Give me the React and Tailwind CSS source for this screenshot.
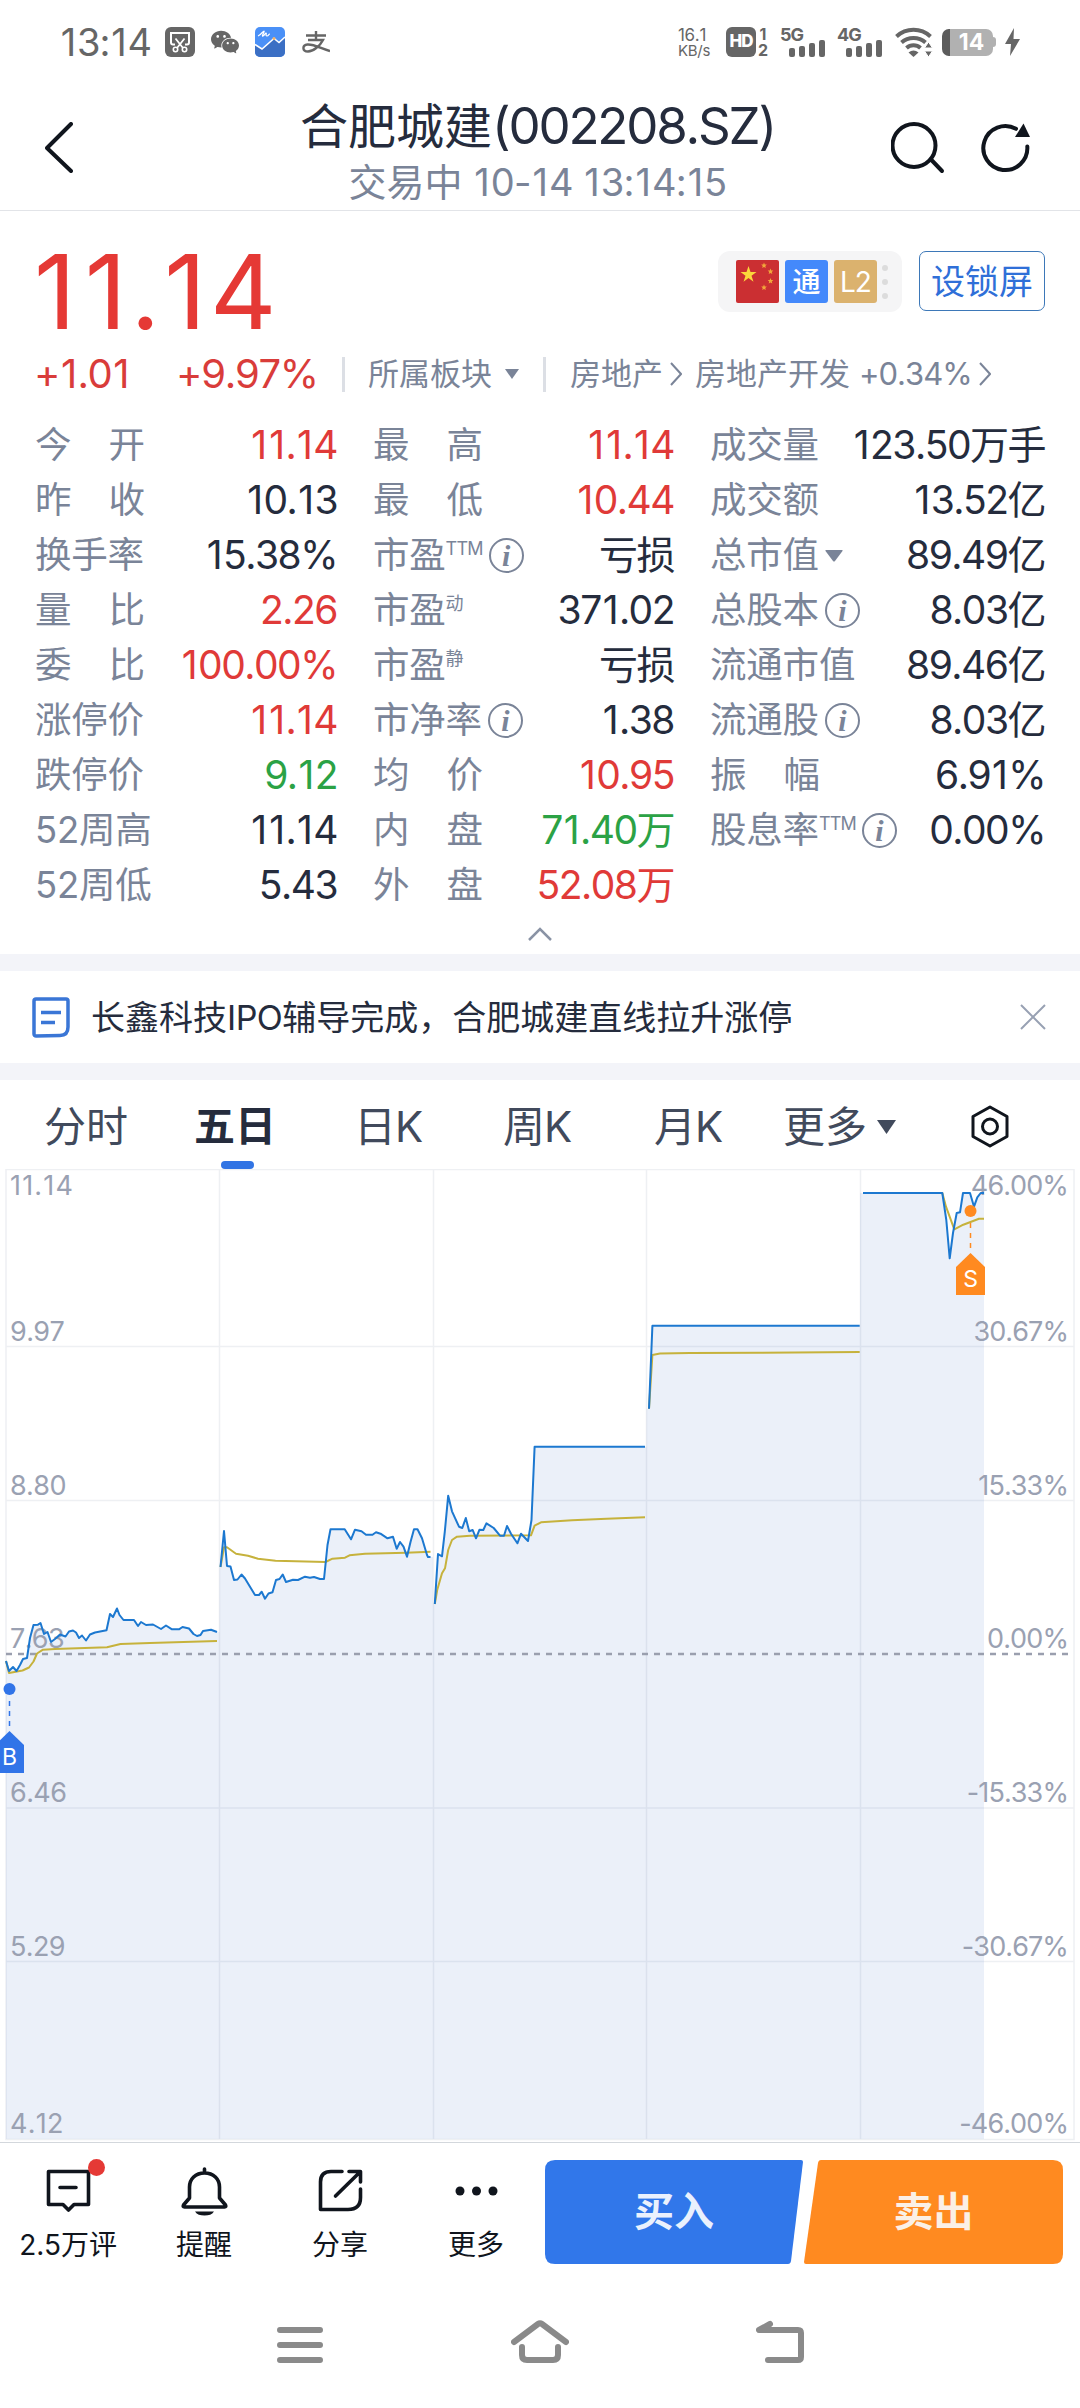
import React from 'react';
import { AiFillWechat } from 'react-icons/ai';

const RED = 'text-[#e03a38]';
const GREEN = 'text-[#2ba245]';
const DARK = 'text-[#252c3d]';

const columns = [
  [
    { label: '今开', value: '11.14', color: RED },
    { label: '昨收', value: '10.13' },
    { label: '换手率', value: '15.38%' },
    { label: '量比', value: '2.26', color: RED },
    { label: '委比', value: '100.00%', color: RED },
    { label: '涨停价', value: '11.14', color: RED },
    { label: '跌停价', value: '9.12', color: GREEN },
    { label: '52周高', value: '11.14' },
    { label: '52周低', value: '5.43' },
  ],
  [
    { label: '最高', value: '11.14', color: RED },
    { label: '最低', value: '10.44', color: RED },
    { label: '市盈', sup: 'TTM', info: true, value: '亏损' },
    { label: '市盈', sup: '动', value: '371.02' },
    { label: '市盈', sup: '静', value: '亏损' },
    { label: '市净率', info: true, value: '1.38' },
    { label: '均价', value: '10.95', color: RED },
    { label: '内盘', value: '71.40万', color: GREEN },
    { label: '外盘', value: '52.08万', color: RED },
  ],
  [
    { label: '成交量', value: '123.50万手' },
    { label: '成交额', value: '13.52亿' },
    { label: '总市值', caret: true, value: '89.49亿' },
    { label: '总股本', info: true, value: '8.03亿' },
    { label: '流通市值', value: '89.46亿' },
    { label: '流通股', info: true, value: '8.03亿' },
    { label: '振幅', value: '6.91%' },
    { label: '股息率', sup: 'TTM', info: true, value: '0.00%' },
  ],
];

const days = [
  {
    start: 6,
    end: 219.5,
    price:
      '6,1661 9,1671 13,1667 16.5,1671 20,1665 23,1659 27,1658 30,1638 33.5,1625 38,1624.7 40.5,1623 44,1634 47.5,1632 51,1642 55,1639 60,1634.5 65.5,1636.5 69,1631.5 73,1630.5 76,1632.5 79,1638 82,1635.5 86,1640.5 90,1634.5 95,1632.5 106.5,1630.3 110,1614 113,1617 117,1608.5 119.5,1615 123.5,1620 134,1620 138,1626 141,1622 146,1625 153,1624.5 161,1629 166,1625.5 172,1629.3 179,1629.3 182.5,1627 189,1628.5 193.5,1634 197,1636 200.5,1635 203,1631 211,1629.7 217,1632',
    average:
      '6,1661 9,1673 22.5,1670.5 29,1667.5 33.5,1661.5 37,1653.5 43,1649.7 55,1649 107,1647.3 120.5,1644 150,1643 217,1641',
  },
  {
    start: 219.5,
    end: 433,
    price:
      '220.5,1567 224,1531 227,1566 230.5,1566.5 234,1580 237.5,1579.5 241.5,1574.5 245,1578.5 255,1595 259,1595 261.7,1591.7 265,1598.7 268.5,1593.5 272.5,1592.3 276,1580 279.5,1579 282.7,1574.5 286,1582 293,1579.7 298,1580 305,1576.7 310,1577.7 314,1577 320,1579 324,1579 327.5,1545 330.5,1529.3 344.7,1529.3 351,1539.3 355,1529.7 361.5,1531.3 366,1534.7 372.5,1534.7 376,1532.3 380.5,1533.7 387.5,1538.3 393,1536.7 396.7,1548.7 400,1542 403.5,1546.7 407,1556.7 410.5,1542 414,1529.3 417.5,1529.3 422,1538.3 427,1555 428,1557 430.5,1557',
    average:
      '220.5,1567 224,1547.3 227,1547.3 236,1553.7 248,1555.7 258,1558.7 275.5,1560.7 325.5,1562 332.5,1558.7 345,1557.7 349.5,1555.3 365,1553.7 406,1552.7 430.5,1551.7',
  },
  {
    start: 433,
    end: 646.5,
    price:
      '434.8,1604 438,1554 442,1556.3 444.8,1531.7 448.2,1495.7 452,1511.3 459,1526.7 462.3,1528 465.8,1518 469.2,1531.3 472.7,1530 476,1538.3 479.5,1529.7 483.3,1530 486.4,1523.3 493.7,1528 500,1535.7 504,1535.7 507,1526 511,1533.7 517.4,1543.3 521,1533.7 528,1541 531.5,1520 534.6,1446.7 645,1446.7',
    average:
      '434.8,1604 437.2,1590 442,1573.3 445,1568.3 448.2,1550 452,1540 457,1536.7 470,1535.7 531,1535.3 534.6,1525.7 541,1522.3 572,1520.3 606.6,1518.7 645,1517.3',
  },
  {
    start: 646.5,
    end: 860,
    price: '649,1408.7 652.4,1325.7 859.7,1325.7',
    average: '649,1408.7 652.4,1355 660,1353.5 690,1353 760,1352.7 859.7,1352',
  },
  {
    start: 860,
    end: 984,
    price:
      '863,1193 942.3,1193 946.3,1220 949.7,1258.3 953,1233 956.7,1213 960,1212.3 963,1193 970,1193 974,1206.7 977.3,1197.3 980.7,1193 984,1193',
    average: '863,1193 942.3,1193 946,1206.7 954.3,1229.3 963.3,1224.7 979,1218.7 984,1218.7',
  },
];

const axisLabels = [
  { y: 1195, price: '11.14', percent: '46.00%' },
  { y: 1341, price: '9.97', percent: '30.67%' },
  { y: 1494.5, price: '8.80', percent: '15.33%' },
  { y: 1648, price: '7.63', percent: '0.00%' },
  { y: 1802, price: '6.46', percent: '-15.33%' },
  { y: 1955.5, price: '5.29', percent: '-30.67%' },
  { y: 2133, price: '4.12', percent: '-46.00%' },
];

// Inter's "1" is narrow, so it gets a little room on both sides
const Num = ({ children }) =>
  children.split(/(1)/).map((part, index) =>
    part === '1' ? (
      <span key={index} className="px-[0.048em]">
        1
      </span>
    ) : (
      part
    )
  );

const SignalBars = ({ label }) => (
  <div className="relative h-[30px] w-[45px]">
    <span className="absolute left-0 top-0 text-[18px] font-bold leading-[15px] tracking-[-1px]">{label}</span>
    <div className="absolute bottom-0 right-0 flex items-end gap-[4px]">
      <span className="h-[9px] w-[6px] rounded-[2px] bg-[#666]" />
      <span className="h-[11px] w-[6px] rounded-[2px] bg-[#666]" />
      <span className="h-[14px] w-[6px] rounded-[2px] bg-[#666]" />
      <span className="h-[17px] w-[6px] rounded-[2px] bg-[#666]" />
    </div>
  </div>
);

const StatusBar = () => (
  <div className="flex h-[84px] items-center justify-between pl-[60px] pr-[60px] text-[#666]">
    <div className="flex items-center">
      <span className="-ml-[1px] w-[106px] text-[38px] leading-none tracking-[-1px]">
        <Num>13:14</Num>
      </span>
      <svg width="30" height="30" viewBox="0 0 30 30" fill="none">
        <rect width="30" height="30" rx="6" fill="#666" />
        <path d="M10 17.500H8a2 2 0 0 1-2-2V6h18v9.500a2 2 0 0 1-2 2h-2" stroke="#fff" strokeWidth="2" />
        <path d="M10.500 11.500 18 21M19.500 11.500 12 21" stroke="#fff" strokeWidth="1.800" />
        <circle cx="10.500" cy="22.500" r="2.200" stroke="#fff" strokeWidth="1.600" />
        <circle cx="19.500" cy="22.500" r="2.200" stroke="#fff" strokeWidth="1.600" />
      </svg>
      <AiFillWechat size={32} className="ml-[14px]" />
      <svg className="ml-[14px]" width="30" height="30" viewBox="0 0 30 30" fill="none">
        <rect width="30" height="30" rx="5" fill="#4a90f7" />
        <path d="M0 17.500 7 22 19 11.500 24 15.500 30 10V25a5 5 0 0 1-5 5H5a5 5 0 0 1-5-5Z" fill="#3b6fc4" />
        <path d="M0 17.500 7 22 19 11.500 24 15.500 30 10" stroke="#fff" strokeWidth="1.500" />
        <circle cx="19" cy="11.500" r="1.500" fill="#f3b46b" />
        <path d="M3 9c3-1 5-5 6-5s-3 6-1 5 2-3 3-3-1 3 1 3 1-2 3-2" stroke="#fff" strokeWidth="1.200" />
      </svg>
      <svg className="ml-[17px]" width="28" height="22" viewBox="0 0 28 22" fill="none" stroke="#666" strokeWidth="2.400">
        <path d="M4 4.500H24M14 0V9M6 9H21C18 15 11 20.500 6 20.500c-6 0-6-6.500-.5-7C12 13 20 18 28 20" />
      </svg>
    </div>

    <div className="flex items-center">
      <div className="mr-[13px] w-[35px] whitespace-nowrap text-[17px] leading-[17px] tracking-[-0.300px]">
        <div>16.1</div>
        <div className="text-[15px] leading-[14px]">KB/s</div>
      </div>
      <span className="flex h-[30px] w-[30px] items-center justify-center rounded-[6px] bg-[#666] text-[17px] font-extrabold tracking-[-1px] text-white">
        HD
      </span>
      <div className="ml-[2px] mr-[12px] w-[10px] text-center text-[16px] font-bold leading-[16px]">
        <div>1</div>
        <div>2</div>
      </div>
      <SignalBars label="5G" />
      <div className="w-[12px]" />
      <SignalBars label="4G" />
      <svg className="ml-[13px]" width="38" height="30" viewBox="0 0 38 30" fill="none" stroke="#666" strokeWidth="4">
        <path d="M1.500 9.500a25 25 0 0 1 34 0" />
        <path d="M6.500 15.500a18 18 0 0 1 24 0" />
        <path d="M11.500 21a10.500 10.500 0 0 1 14 0" />
        <path d="m13.500 25.500 5 4.500 5-4.500a8 8 0 0 0-10 0Z" fill="#666" stroke="none" />
        <path d="m33.500 15 4 6h-8Zm0 15 4-6h-8Z" fill="#666" stroke="#fff" strokeWidth="1" />
      </svg>
      <div className="ml-[9px] flex items-center">
        <div className="flex h-[27px] w-[51px] items-center justify-center overflow-hidden rounded-[7px] border-l-[8px] border-[#5c5c5c] bg-[#b1b1b1] text-[23px] font-bold text-white">
          14
        </div>
        <span className="h-[10px] w-[3px] rounded-r bg-[#b1b1b1]" />
      </div>
      <svg className="ml-[9px]" width="15" height="28" viewBox="0 0 15 28" fill="#666">
        <path d="M9 0 0 16h6L5 28 15 11H8.500Z" />
      </svg>
    </div>
  </div>
);

const Header = () => (
  <header className="flex h-[127px] items-start justify-between border-b border-[#e2e4e8] pl-[45px] pr-[50px]">
    <div className="w-[139px] pt-[38px]">
      <svg width="28" height="51" viewBox="0 0 28 51" fill="none" stroke="#10151d" strokeWidth="4" strokeLinecap="round" strokeLinejoin="round">
        <path d="M26 2 2 26 26 49" />
      </svg>
    </div>
    <div className="flex flex-col items-center pt-[12px]">
      <h1 className="whitespace-nowrap text-[51px] leading-[60px] tracking-[-2.200px] text-[#252c3d]">
        <span className="text-[48px] tracking-normal">合肥城建</span>(002208.SZ)
      </h1>
      <p className="whitespace-nowrap text-[38px] leading-[50px] tracking-[-0.800px] text-[#7a8498]">
        <span className="tracking-normal">交易中</span> <Num>10-14 13:14:15</Num>
      </p>
    </div>
    <div className="flex w-[139px] gap-[36px] pt-[38px]">
      <svg width="54" height="52" viewBox="0 0 54 52" fill="none" stroke="#10151d" strokeWidth="4" strokeLinecap="round">
        <circle cx="23" cy="23.500" r="21.500" />
        <path d="M40 37.500 51 49" />
      </svg>
      <svg width="49" height="52" viewBox="0 0 49 52" fill="none" stroke="#10151d" strokeWidth="4" strokeLinecap="round">
        <path d="M46.300 24.500A22 22 0 1 1 35 6.800" />
        <path d="M42.500 1.500 34 15H49Z" fill="#10151d" stroke="none" />
      </svg>
    </div>
  </header>
);

const ChevronThin = () => (
  <svg width="12" height="24" viewBox="0 0 12 24" fill="none" stroke="#7a8498" strokeWidth="2">
    <path d="m1 1 10 11L1 23" />
  </svg>
);

const PriceSummary = () => (
  <section className="pl-[35px] pr-[35px]">
    <div className="flex h-[133px] items-start justify-between pt-[40px]">
      <div className="-ml-[6px] pt-[3px] text-[103px] leading-[75px] tracking-[-1px] text-[#e53935]">
        <Num>11.14</Num>
      </div>
      <div className="flex items-start gap-[17px]">
        <div className="flex h-[61px] w-[184px] items-center gap-[6px] rounded-[12px] bg-[#f5f5f6] pl-[18px]">
          <svg width="43" height="43" viewBox="0 0 43 43">
            <rect width="43" height="43" rx="2" fill="#cb2f32" />
            <path d="m12.500 6 2 6h6l-5 3.700 2 6.100-5-3.800-5 3.800 2-6.100-5-3.700h6Z" fill="#fbd73b" />
            <g fill="#f2a73b">
              <path id="star" d="m28 2.500.8 1.900 2 .2-1.500 1.300.5 2L28 6.900l-1.800 1 .5-2-1.500-1.300 2-.2Z" />
              <use href="#star" x="6.500" y="6" />
              <use href="#star" x="6.500" y="15.500" />
              <use href="#star" y="22" />
            </g>
          </svg>
          <span className="flex h-[43px] w-[43px] items-center justify-center rounded-[3px] bg-[#4489fb] text-[28px] font-medium text-white">通</span>
          <span className="flex h-[43px] w-[43px] items-center justify-center rounded-[3px] bg-[#dbb26e] text-[28px] tracking-[-1px] text-white">L2</span>
          <div className="-ml-[1px] flex flex-col gap-[8px]">
            <span className="h-[6px] w-[6px] rounded-full bg-[#dcdcdc]" />
            <span className="h-[6px] w-[6px] rounded-full bg-[#dcdcdc]" />
            <span className="h-[6px] w-[6px] rounded-full bg-[#dcdcdc]" />
          </div>
        </div>
        <button type="button" className="flex h-[60px] w-[126px] items-center justify-center rounded-[7px] border border-[#3d78b8] text-[34px] text-[#2f6fd8]">
          设锁屏
        </button>
      </div>
    </div>

    <div className="flex h-[60px] items-center text-[31px] text-[#7a8498]">
      <span className="-ml-[1px] w-[142px] text-[40px] tracking-[-1.500px] text-[#d93c3a]">
        <Num>+1.01</Num>
      </span>
      <span className="w-[166px] text-[40px] tracking-[-1.300px] text-[#d93c3a]">+9.97%</span>
      <span className="h-[35px] w-[3px] bg-[#dcdfe5]" />
      <span className="ml-[23px]">所属板块</span>
      <svg className="ml-[13px]" width="14" height="10" viewBox="0 0 14 10" fill="#7a8498">
        <path d="M0 0H14L7 10Z" />
      </svg>
      <span className="ml-[24px] h-[35px] w-[3px] bg-[#dcdfe5]" />
      <span className="ml-[24px] mr-[7px]">房地产</span>
      <ChevronThin />
      <span className="ml-[13px]">房地产开发</span>
      <span className="ml-[9px] mr-[9px] w-[111px] tracking-[-1px]">+0.34%</span>
      <ChevronThin />
    </div>
  </section>
);

const InfoIcon = () => (
  <span className="ml-[6px] flex h-[35px] w-[35px] items-center justify-center rounded-full border-2 border-[#7a8498] font-['Liberation_Serif',serif] text-[30px] font-bold italic leading-none">
    i
  </span>
);

const QuoteRow = ({ label, sup, info, caret, value, color = DARK }) => (
  <div className="flex h-[55px] items-center justify-between whitespace-nowrap">
    <div className="flex items-center text-[36.500px] text-[#7a8498]">
      {label.length === 2 && !sup ? (
        <span className="flex w-[110px] justify-between">
          <span>{label[0]}</span>
          <span>{label[1]}</span>
        </span>
      ) : (
        <span className="tracking-[-0.200px]">{label}</span>
      )}
      {sup && <span className="-mt-[13px] text-[18px] leading-none tracking-[-0.800px]">{sup}</span>}
      {info && <InfoIcon />}
      {caret && (
        <svg className="ml-[6px]" width="18" height="12" viewBox="0 0 18 12" fill="#7a8498">
          <path d="M1 0H17Q18 0 17.500 1L10 11Q9 12 8 11L.5 1Q0 0 1 0Z" />
        </svg>
      )}
    </div>
    <span className={`text-[39px] tracking-[-1.500px] ${color}`}>
      <Num>{value}</Num>
    </span>
  </div>
);

const QuoteGrid = () => (
  <section className="h-[550px] pl-[35px] pr-[35px] pt-[14px]">
    <div className="grid h-[495px] grid-cols-[302px_301px_335px] gap-x-[36px]">
      {columns.map((rows, index) => (
        <div key={index}>
          {rows.map((row) => (
            <QuoteRow key={row.label + (row.sup || '')} {...row} />
          ))}
        </div>
      ))}
    </div>
    <svg className="mx-auto mt-[14px]" width="24" height="14" viewBox="0 0 24 14" fill="none" stroke="#8a93a5" strokeWidth="2.500">
      <path d="m1 13 11-11 11 11" />
    </svg>
  </section>
);

const NewsBar = () => (
  <section className="flex h-[126px] items-center border-y-[17px] border-[#f3f4f9] pl-[32px] pr-[34px]">
    <svg width="38" height="41" viewBox="0 0 38 41" fill="none" stroke="#3a76d6" strokeWidth="3.500">
      <path d="M4 2H34a2 2 0 0 1 2 2V30c0 6-3 8.500-8 8.500L4 39a2 2 0 0 1-2-2V4a2 2 0 0 1 2-2ZM9 15.500H29M9 25.500H23" />
    </svg>
    <p className="ml-[21px] flex-1 whitespace-nowrap text-[34px] text-[#252c3d]">
      长鑫科技<span className="tracking-[-0.500px]">IPO</span>辅导完成，合肥城建直线拉升涨停
    </p>
    <svg width="26" height="26" viewBox="0 0 26 26" fill="none" stroke="#98a1b3" strokeWidth="2">
      <path d="m1 1 24 24M25 1 1 25" />
    </svg>
  </section>
);

const ChartTabs = () => (
  <nav className="relative flex h-[89px] items-center pt-[4px] text-[42px] text-[#414a5c]">
    <span className="ml-[44px] w-[150px]">分时</span>
    <span className="w-[160px] text-[41px] font-bold text-[#252c3d]">五日</span>
    <span className="w-[149px] tracking-[-1px]">日K</span>
    <span className="w-[151px] tracking-[-1px]">周K</span>
    <span className="w-[129px] tracking-[-1px]">月K</span>
    <span>更多</span>
    <svg className="ml-[10px]" width="19" height="14" viewBox="0 0 19 14" fill="#414a5c">
      <path d="M0 0H19L9.500 14Z" />
    </svg>
    <svg className="ml-[75px]" width="38" height="43" viewBox="0 0 38 43" fill="none" stroke="#10151d" strokeWidth="3">
      <path d="M19 2 36 11.500V31.500L19 41 2 31.500V11.500Z" strokeLinejoin="round" />
      <circle cx="19" cy="21.500" r="7.500" />
    </svg>
    <span className="absolute bottom-0 left-[221px] h-[8px] w-[33px] rounded-[4px] bg-[#3174e4]" />
  </nav>
);

const TradeMarker = ({ x, y, tagY, color, label }) => (
  <g transform={`translate(${x} ${y})`}>
    <circle r="6" fill={color} />
    <path d={`M0 12V${tagY - 4}`} stroke={color} strokeWidth="1.500" strokeDasharray="5 5" />
    <g transform={`translate(0 ${tagY})`}>
      <path d="M0 0 14.500 14V42H-14.500V14Z" fill={color} />
      <text y="34" textAnchor="middle" fontSize="23" fill="#fff">
        {label}
      </text>
    </g>
  </g>
);

const FiveDayChart = () => (
  <svg className="block" width="1080" height="973" viewBox="0 1169 1080 973">
    <g stroke="#eef0f3" strokeWidth="1.500" fill="none">
      <rect x="6" y="1169.500" width="1068" height="970" />
      <path d="M6 1346.500H1074M6 1500.500H1074M6 1808H1074M6 1961.500H1074" />
      <path d="M219.500 1169V2139M433.500 1169V2139M646.500 1169V2139M860.500 1169V2139" />
    </g>
    {days.map((day) => {
      const first = day.price.split(' ')[0].split(',')[1];
      const last = day.price.split(',').pop();
      return (
        <polygon
          key={day.start}
          points={`${day.start},2139 ${day.start},${first} ${day.price} ${day.end},${last} ${day.end},2139`}
          fill="#3a6fc9"
          fillOpacity="0.1"
        />
      );
    })}
    <path d="M6 1654H1074" stroke="#9a9fae" strokeWidth="2.500" strokeDasharray="6 6" />
    <g fontSize="27" fill="#9aa1b2" letterSpacing="-0.900">
      {axisLabels.map((row) => (
        <React.Fragment key={row.y}>
          <text x="10" y={row.y} letterSpacing={row.price === '11.14' ? 1.2 : row.price === '4.12' ? 0.3 : -0.6}>
            {row.price}
          </text>
          <text x="1068" y={row.y} textAnchor="end">
            {row.percent}
          </text>
        </React.Fragment>
      ))}
    </g>
    {days.map((day) => (
      <g key={day.start} fill="none" strokeWidth="2" strokeLinejoin="round">
        <polyline points={day.average} stroke="#c6b23c" />
        <polyline points={day.price} stroke="#1c78d0" />
      </g>
    ))}
    <TradeMarker x={9.5} y={1689} tagY={42} color="#3174e8" label="B" />
    <TradeMarker x={970.5} y={1211} tagY={42} color="#ff8a20" label="S" />
  </svg>
);

const actions = [
  {
    label: '2.5万评',
    badge: true,
    icon: <path d="M5.500 5.500H45.500V38.500H31L25.500 44 20 38.500H5.500ZM17 21.500H33" />,
  },
  {
    label: '提醒',
    icon: (
      <>
        <path d="M25.500 3V6M25.500 7c-9 0-15 6-15 14v11l-6 7q-1 2 1 2H45.500q2 0 1-2l-6-7V21c0-8-6-14-15-14Z" />
        <path d="M16 45.500H35c-2 3-5 4-9.500 4S18 48.500 16 45.500Z" fill="#10151d" stroke="none" />
      </>
    ),
  },
  {
    label: '分享',
    icon: <path d="M27 5.500H16C9 5.500 5.500 9 5.500 16V43.500H33c8 0 12.500-4 12.500-12V23M34 5.500H45.500V16M45 6 20.500 30" />,
  },
  {
    label: '更多',
    icon: (
      <g fill="#10151d" stroke="none">
        <circle cx="9" cy="25" r="4.500" />
        <circle cx="25.500" cy="25" r="4.500" />
        <circle cx="42" cy="25" r="4.500" />
      </g>
    ),
  },
];

const ActionBar = () => (
  <footer className="flex h-[138px] border-t border-[#d3d7dc]">
    <div className="flex w-[545px]">
      {actions.map((action) => (
        <button key={action.label} type="button" className="relative flex w-[136px] flex-col items-center pt-[23px] text-[#10151d]">
          <svg width="51" height="51" viewBox="0 0 51 51" fill="none" stroke="#10151d" strokeWidth="3.600" strokeLinejoin="round" strokeLinecap="round">
            {action.icon}
          </svg>
          <span className="mt-[10px] whitespace-nowrap text-[28px] leading-[36px] tracking-[-0.100px]">{action.label}</span>
          {action.badge && <span className="absolute left-[88px] top-[16px] h-[17px] w-[17px] rounded-full bg-[#e53935]" />}
        </button>
      ))}
    </div>
    <div className="flex pt-[17px]">
      <button type="button" className="relative h-[104px] w-[258px] text-[40px] font-bold text-[#eaf1fd]">
        <svg className="absolute inset-0" width="258" height="104" viewBox="0 0 258 104" fill="#3177ea">
          <path d="M10 0H256q2 0 2 2L246 101q-.5 3-3 3H10Q0 104 0 94V10Q0 0 10 0Z" />
        </svg>
        <span className="relative">买入</span>
      </button>
      <button type="button" className="relative ml-[1px] h-[104px] w-[259px] text-[40px] font-bold text-[#fbf0e6]">
        <svg className="absolute inset-0" width="259" height="104" viewBox="0 0 259 104" fill="#ff8a20">
          <path d="M17 0H249Q259 0 259 10V94Q259 104 249 104H2q-2 0-2-2L14 3Q14.500 0 17 0Z" />
        </svg>
        <span className="relative">卖出</span>
      </button>
    </div>
  </footer>
);

const SystemNav = () => (
  <div className="flex h-[128px] pl-[277px] pt-[40px]">
    <svg width="46" height="43" viewBox="0 0 46 43" fill="none" stroke="#8a8a8a" strokeWidth="6" strokeLinecap="round">
      <path d="M3 10H43M3 25H43M3 40H43" />
    </svg>
    <svg className="ml-[188px]" width="58" height="43" viewBox="0 0 58 43" fill="none" stroke="#8a8a8a" strokeWidth="6" strokeLinecap="round" strokeLinejoin="round">
      <path d="M3 22 27 4q2-1.500 4 0L55 22M11 27V35q0 5 5 5H42q5 0 5-5V27" />
    </svg>
    <svg className="ml-[187px]" width="48" height="43" viewBox="0 0 48 43" fill="none" stroke="#8a8a8a" strokeWidth="6" strokeLinecap="round" strokeLinejoin="round">
      <path d="M14 4 3 10H42q3 0 3 3V37q0 3-3 3H12" />
    </svg>
  </div>
);

const App = () => (
  <div className="flex h-[2408px] w-[1080px] flex-col overflow-hidden bg-white font-['Inter','Noto_Sans_CJK_SC',sans-serif] [font-kerning:none]">
    <StatusBar />
    <Header />
    <PriceSummary />
    <QuoteGrid />
    <NewsBar />
    <ChartTabs />
    <FiveDayChart />
    <ActionBar />
    <SystemNav />
  </div>
);

export default App;
